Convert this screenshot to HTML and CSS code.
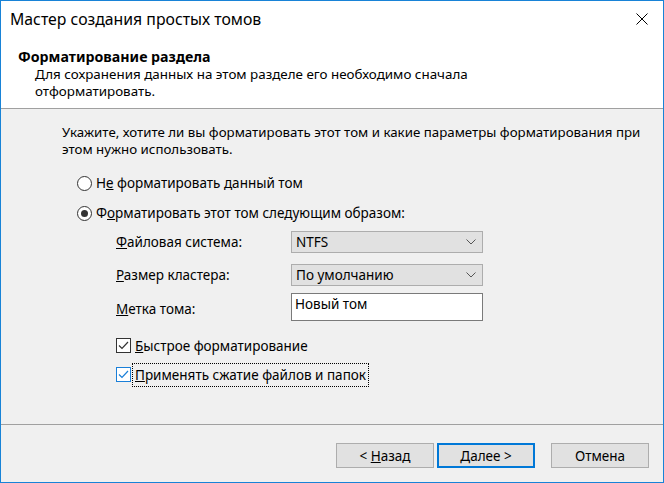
FILE: index.html
```html
<!DOCTYPE html>
<html lang="ru">

<head>
    <meta charset="UTF-8">
    <title>Мастер создания простых томов</title>
    <link rel="stylesheet" href="styles.css">
</head>

<body>
    <div class="window">
        <div class="titlebar">
            <span class="title">Мастер создания простых томов</span>
            <svg class="close" width="12" height="12" viewBox="0 0 12 12">
                <path d="M0.5 0.5 L11.5 11.5 M11.5 0.5 L0.5 11.5" stroke="#000" stroke-width="1" fill="none"/>
            </svg>
        </div>

        <div class="header">
            <h1>Форматирование раздела</h1>
            <p>Для сохранения данных на этом разделе его необходимо сначала<br>отформатировать.</p>
        </div>

        <div class="content">
            <p class="intro">Укажите, хотите ли вы форматировать этот том и какие параметры форматирования при этом нужно использовать.</p>

            <div class="option">
                <span class="radio"></span>
                <span>Н<u>е</u> форматировать данный том</span>
            </div>
            <div class="option">
                <span class="radio checked"></span>
                <span>Ф<u>о</u>рматировать этот том следующим образом:</span>
            </div>

            <div class="params">
                <span class="label"><u>Ф</u>айловая система:</span>
                <div class="combo"><span>NTFS</span><svg width="10" height="6" viewBox="0 0 10 6"><path d="M0.5 0.5 L5 5 L9.5 0.5" stroke="#555" fill="none"/></svg></div>

                <span class="label"><u>Р</u>азмер кластера:</span>
                <div class="combo"><span>По умолчанию</span><svg width="10" height="6" viewBox="0 0 10 6"><path d="M0.5 0.5 L5 5 L9.5 0.5" stroke="#555" fill="none"/></svg></div>

                <span class="label"><u>М</u>етка тома:</span>
                <div class="textbox">Новый том</div>
            </div>

            <div class="checks">
                <div class="check-row">
                    <span class="checkbox"><svg width="11" height="9" viewBox="0 0 11 9"><path d="M1 4.5 L4 7.5 L10 1" stroke="#333" stroke-width="1.2" fill="none"/></svg></span>
                    <span><u>Б</u>ыстрое форматирование</span>
                </div>
                <div class="check-row">
                    <span class="checkbox focused"><svg width="11" height="9" viewBox="0 0 11 9"><path d="M1 4.5 L4 7.5 L10 1" stroke="#1a7fd8" stroke-width="1.2" fill="none"/></svg></span>
                    <span class="focus-rect"><u>П</u>рименять сжатие файлов и папок</span>
                </div>
            </div>
        </div>

        <div class="footer">
            <button>&lt; <u>Н</u>азад</button>
            <button class="default"><u>Д</u>алее &gt;</button>
            <button class="cancel">Отмена</button>
        </div>
    </div>
</body>

</html>
```

FILE: styles.css
```css
body {
    margin: 0;
    font-family: "Noto Sans", "Open Sans", sans-serif;
    font-size: 13.5px;
    color: #000;
}

.window {
    width: 664px;
    height: 483px;
    box-sizing: border-box;
    border: 1px solid #1883d7;
    background: #f0f0f0;
    display: flex;
    flex-direction: column;
}

.titlebar {
    height: 37px;
    background: #fff;
    display: flex;
    align-items: center;
    justify-content: space-between;
    padding: 0 15px 0 9px;
}

.title {
    font-size: 15.8px;
    margin-top: -1px;
}

.close {
    margin-top: -2px;
}

.header {
    height: 71px;
    background: #fff;
    border-bottom: 1px solid #a0a0a0;
    padding: 9px 0 0 17px;
    box-sizing: border-box;
}

.header h1 {
    margin: 0;
    font-size: 14.2px;
    font-weight: bold;
    line-height: 19px;
}

.header p {
    margin: 0;
    padding-left: 17px;
    font-size: 13.4px;
    line-height: 17px;
}

.content {
    flex: 1;
    padding: 15px 0 0 61px;
}

.intro {
    margin: 0 0 10px;
    width: 590px;
    font-size: 13.3px;
    line-height: 17px;
}

.option {
    display: flex;
    align-items: center;
    gap: 4px;
    height: 30px;
    padding-left: 15px;
}

.radio {
    width: 13px;
    height: 13px;
    border: 1px solid #333;
    border-radius: 50%;
    background: #fff;
    position: relative;
}

.radio.checked::after {
    content: "";
    position: absolute;
    left: 3px;
    top: 3px;
    width: 7px;
    height: 7px;
    border-radius: 50%;
    background: #333;
}

.params {
    display: grid;
    grid-template-columns: 175px 192px;
    row-gap: 11px;
    align-items: center;
    margin: 3px 0 0 54px;
}

.combo {
    height: 22px;
    box-sizing: border-box;
    border: 1px solid #adadad;
    background: #e1e1e1;
    display: flex;
    align-items: center;
    justify-content: space-between;
    padding: 0 6px 0 4px;
}

.textbox {
    height: 28px;
    box-sizing: border-box;
    border: 1px solid #7a7a7a;
    background: #fff;
    padding: 1px 3px;
    margin-top: -4px;
}

.checks {
    margin-top: 10px;
}

.check-row {
    display: flex;
    align-items: center;
    gap: 4px;
    height: 29px;
    padding-left: 54px;
}

.checkbox {
    width: 13px;
    height: 13px;
    border: 1px solid #333;
    background: #fff;
    display: flex;
    align-items: center;
    justify-content: center;
}

.checkbox.focused {
    border-color: #1a7fd8;
}

.focus-rect {
    outline: 1px dotted #000;
    outline-offset: 2px;
}

.footer {
    height: 58px;
    border-top: 1px solid #a0a0a0;
    display: flex;
    align-items: flex-start;
    padding: 18px 0 0 335px;
    box-sizing: border-box;
}

.footer button {
    width: 98px;
    height: 25px;
    margin: 0;
    border: 1px solid #adadad;
    background: #e1e1e1;
    font-family: inherit;
    font-size: 13.5px;
    color: #000;
    padding: 0;
}

.footer button.default {
    border: 2px solid #0078d7;
    margin-left: 3px;
}

.footer button.cancel {
    margin-left: 16px;
}
```
